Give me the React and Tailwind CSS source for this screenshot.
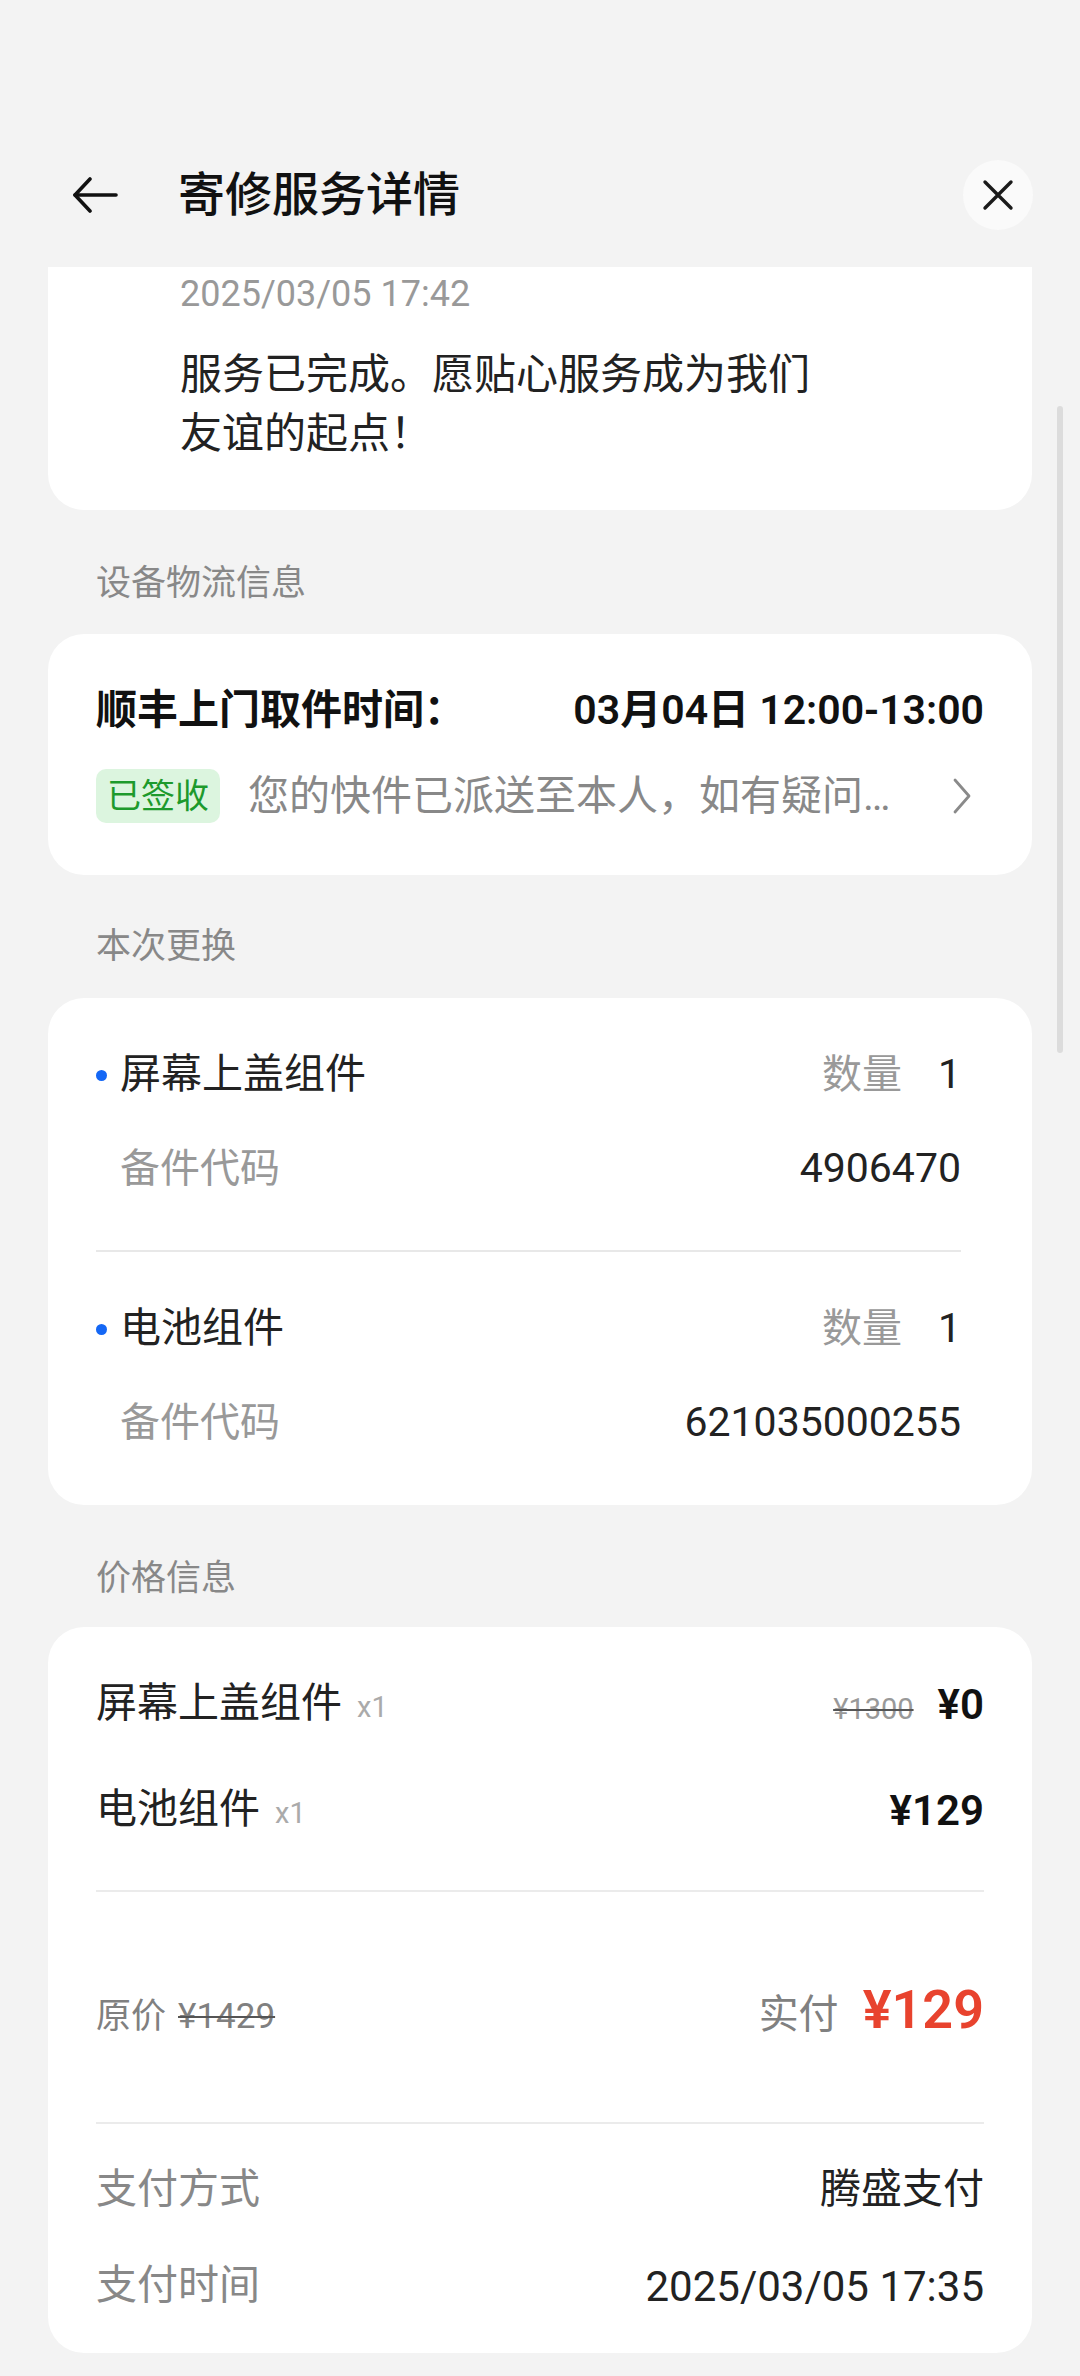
import React from 'react';

const BackIcon = () => (
  <svg width="46" height="36" viewBox="0 0 46 36" fill="none" stroke="#111" strokeWidth="3.6" strokeLinecap="round" strokeLinejoin="round">
    <path d="M44 18H3" />
    <path d="M18 2L3 18l15 16" />
  </svg>
);

const CloseIcon = () => (
  <svg width="32" height="32" viewBox="0 0 32 32" fill="none" stroke="#1a1a1a" strokeWidth="3.4" strokeLinecap="round">
    <path d="M3 3l26 26M29 3L3 29" />
  </svg>
);

const Chevron = () => (
  <svg width="20" height="36" viewBox="0 0 20 36" fill="none" stroke="#8a8a8a" strokeWidth="2.8" strokeLinecap="round" strokeLinejoin="round">
    <path d="M3 2l14 16L3 34" />
  </svg>
);

const SectionLabel = ({ children, top, bottom }) => (
  <div className={`pl-[48px] text-[35px] leading-[48px] text-[#888] ${top} ${bottom}`}>{children}</div>
);

const PartItem = ({ name, code }) => (
  <div>
    <div className="h-[56px] flex items-center">
      <span className="w-[11px] h-[11px] rounded-full bg-[#1467f5]" />
      <span className="ml-[13px] text-[41px] text-[#222]">{name}</span>
      <span className="ml-auto text-[40px] text-[#999]">数量</span>
      <span className="ml-[36px] text-[41px] text-[#222]">1</span>
    </div>
    <div className="mt-[38px] h-[56px] flex items-center justify-between pl-[24px]">
      <span className="text-[40px] text-[#999]">备件代码</span>
      <span className="text-[41px] text-[#222]">{code}</span>
    </div>
  </div>
);

export default function App() {
  return (
    <div className="relative w-[1080px] h-[2376px] overflow-hidden bg-[#f3f3f3] font-[Roboto,'Noto_Sans_CJK_SC',sans-serif]">
      <header className="h-[267px] pt-[160px] pl-[72px] pr-[47px] flex items-start">
        <div className="h-[70px] flex items-center">
          <BackIcon />
        </div>
        <h1 className="ml-[60px] text-[47px] leading-[70px] font-medium text-[#111]">寄修服务详情</h1>
        <div className="ml-auto w-[70px] h-[70px] rounded-full bg-[#fafafa] flex items-center justify-center">
          <CloseIcon />
        </div>
      </header>

      <main className="px-[48px]">
        <section className="bg-white rounded-b-[36px] pl-[132px] pt-[5px] pb-[47px]">
          <div className="text-[36px] leading-[44px] text-[#999]">2025/03/05 17:42</div>
          <p className="mt-[29px] w-[650px] text-[42px] leading-[59px] text-[#222]">
            服务已完成。愿贴心服务成为我们友谊的起点！
          </p>
        </section>

        <SectionLabel top="mt-[50px]" bottom="mb-[26px]">设备物流信息</SectionLabel>
        <section className="bg-white rounded-[36px] pt-[50px] pb-[52px] pl-[48px] pr-[48px]">
          <div className="flex justify-between text-[41px] leading-[52px] font-semibold text-[#111]">
            <span>顺丰上门取件时间：</span>
            <span>03月04日 12:00-13:00</span>
          </div>
          <div className="mt-[33px] h-[54px] flex items-center">
            <span className="h-[54px] px-[11px] rounded-[10px] bg-[#dcf5df] text-[#1d9a2c] text-[34px] leading-[54px]">已签收</span>
            <span className="ml-[28px] w-[660px] truncate text-[41px] leading-[54px] text-[#888]">
              您的快件已派送至本人，如有疑问请联系快递员
            </span>
            <span className="ml-auto mr-[12px] flex items-center">
              <Chevron />
            </span>
          </div>
        </section>

        <SectionLabel top="mt-[48px]" bottom="mb-[27px]">本次更换</SectionLabel>
        <section className="bg-white rounded-[36px] pt-[49px] pb-[54px] pl-[48px] pr-[71px]">
          <PartItem name="屏幕上盖组件" code="4906470" />
          <div className="mt-[53px] mb-[49px] h-[2px] bg-[#e8e8e8]" />
          <PartItem name="电池组件" code="621035000255" />
        </section>

        <SectionLabel top="mt-[50px]" bottom="mb-[24px]">价格信息</SectionLabel>
        <section className="bg-white rounded-[36px] pt-[49px] pb-[39px] pl-[48px] pr-[48px]">
          <div className="h-[56px] flex items-center justify-between">
            <div className="flex items-baseline">
              <span className="text-[41px] text-[#222]">屏幕上盖组件</span>
              <span className="ml-[15px] text-[29px] text-[#aaa]">x1</span>
            </div>
            <div className="flex items-baseline">
              <span className="text-[29px] text-[#999] line-through decoration-[#555] decoration-2">¥1300</span>
              <span className="ml-[24px] text-[42px] font-semibold text-[#111]">¥0</span>
            </div>
          </div>
          <div className="mt-[50px] h-[56px] flex items-center justify-between">
            <div className="flex items-baseline">
              <span className="text-[41px] text-[#222]">电池组件</span>
              <span className="ml-[15px] text-[29px] text-[#aaa]">x1</span>
            </div>
            <span className="text-[42px] font-semibold text-[#111]">¥129</span>
          </div>

          <div className="mt-[52px] h-[2px] bg-[#ebebeb]" />

          <div className="mt-[83px] h-[70px] leading-[70px] flex items-baseline justify-between">
            <div className="flex items-baseline text-[35px] text-[#808080]">
              <span>原价</span>
              <span className="ml-[12px] line-through decoration-[#555] decoration-2">¥1429</span>
            </div>
            <div className="flex items-baseline">
              <span className="text-[40px] text-[#808080]">实付</span>
              <span className="ml-[24px] text-[54px] font-semibold text-[#e8432e]">¥129</span>
            </div>
          </div>

          <div className="mt-[77px] h-[2px] bg-[#ebebeb]" />

          <div className="mt-[38px] h-[56px] flex items-center justify-between">
            <span className="text-[41px] text-[#888]">支付方式</span>
            <span className="text-[41px] text-[#222]">腾盛支付</span>
          </div>
          <div className="mt-[40px] h-[56px] flex items-center justify-between">
            <span className="text-[41px] text-[#888]">支付时间</span>
            <span className="text-[42px] text-[#222]">2025/03/05 17:35</span>
          </div>
        </section>
      </main>

      <div className="absolute left-[1057px] top-[406px] w-[6px] h-[647px] rounded-full bg-[#dcdcdc]" />
    </div>
  );
}
